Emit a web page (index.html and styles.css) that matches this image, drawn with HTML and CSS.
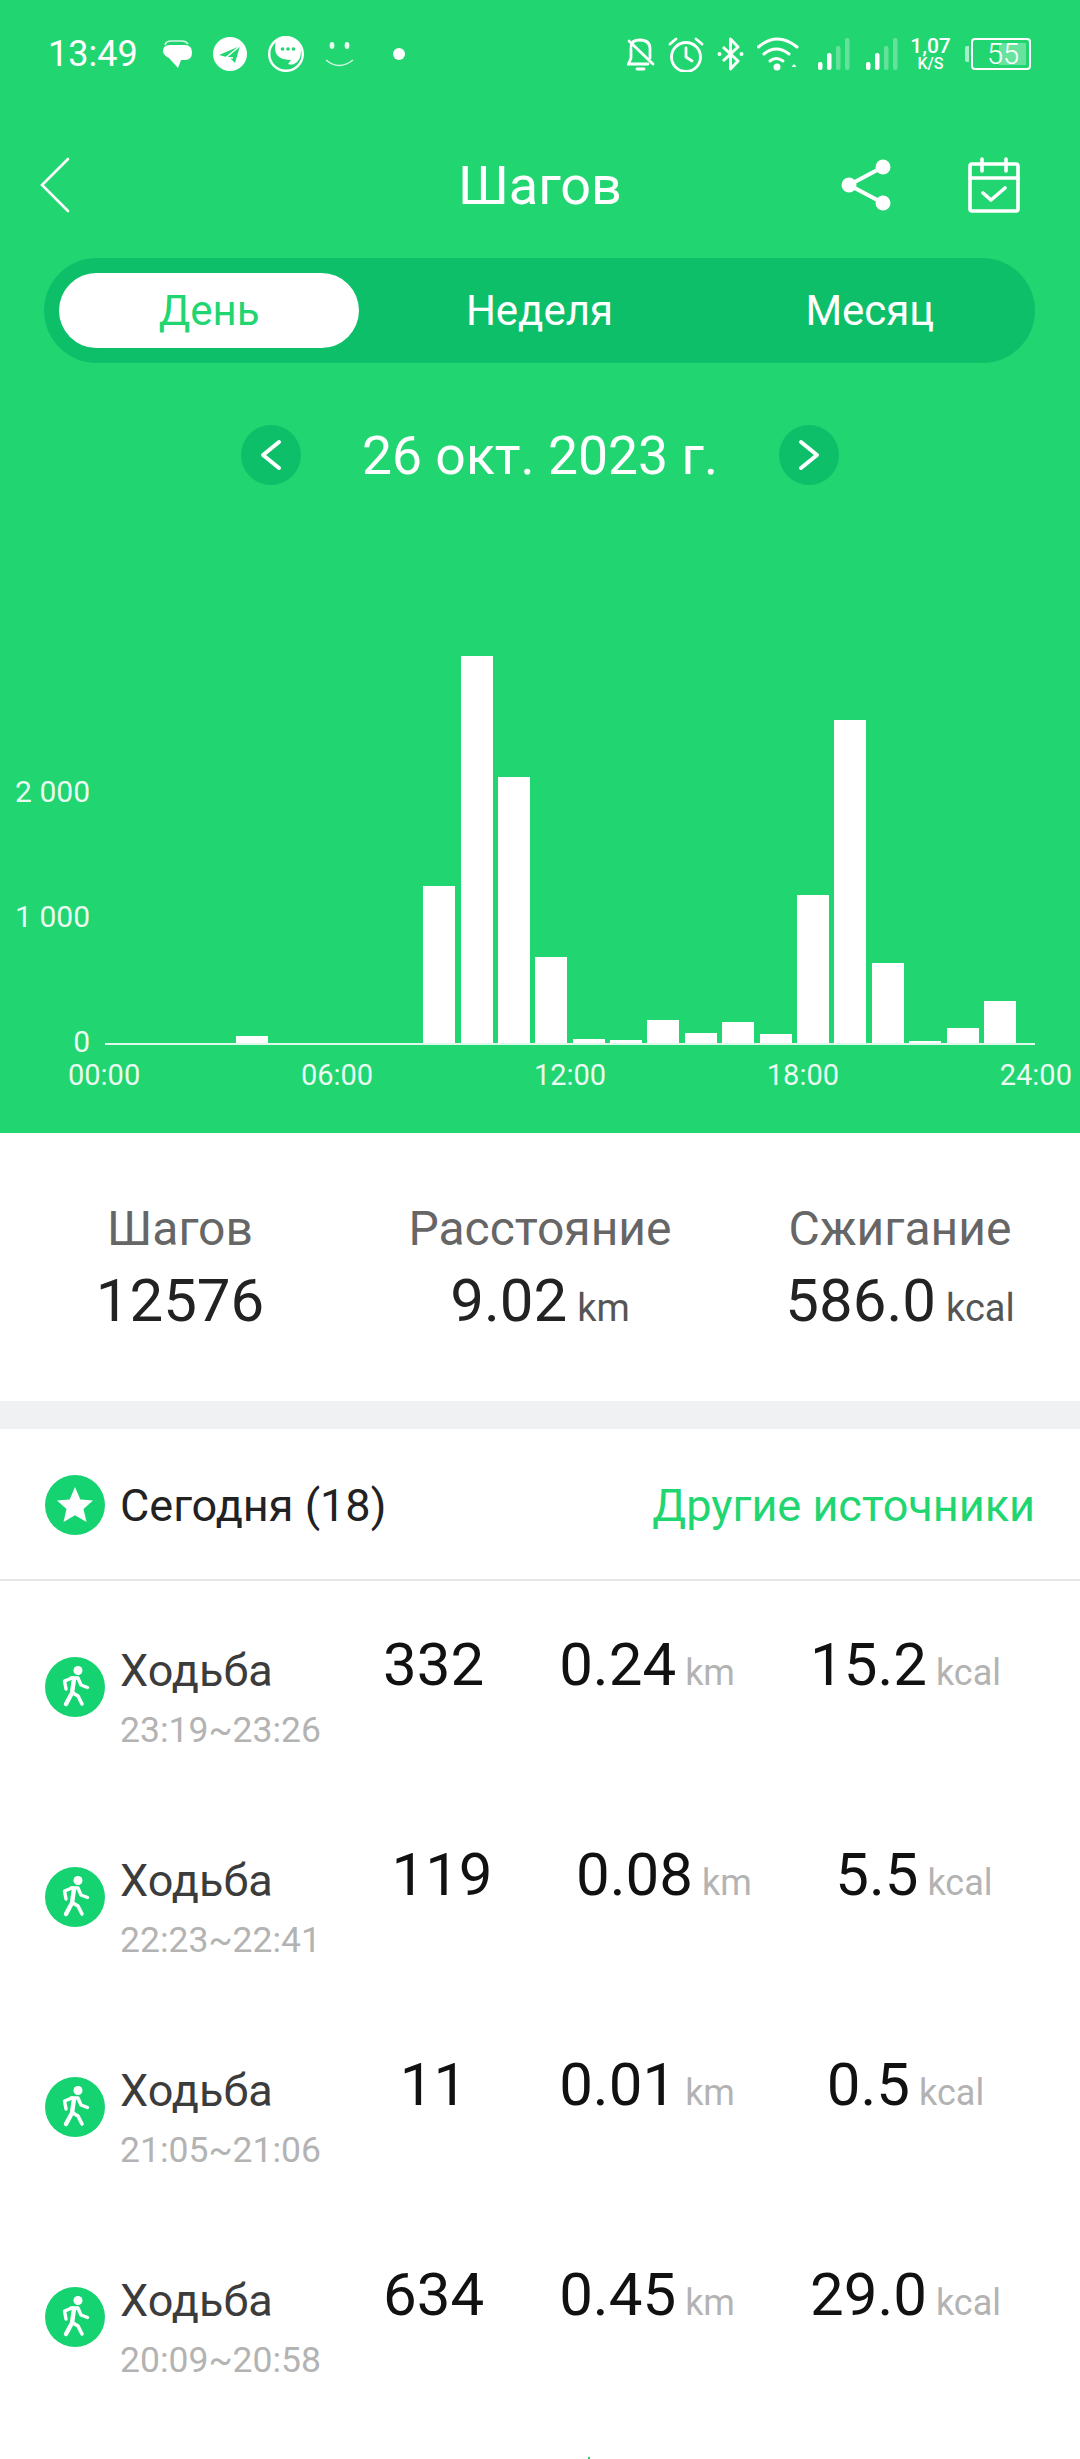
FILE: index.html
```html
<!DOCTYPE html>
<html lang="ru">
<head>
    <meta charset="UTF-8">
    <meta name="viewport" content="width=device-width, initial-scale=1.0">
    <title>Шагов</title>
    <link rel="stylesheet" href="styles.css">
</head>
<body>

<div class="page">
    <header class="header">
        <div class="statusbar">
            <div class="status-left">
                <span class="clock">13:49</span>
                <svg width="30" height="28" viewBox="0 0 30 28">
                    <path d="M3 5 Q4 1 9 1 H20 Q24 1 26 4" fill="none" stroke="#fff" stroke-width="1.6" opacity=".8"/>
                    <path d="M8 5 H23 Q30 5 30 12.5 Q30 20 23 20 H19 L16 28 L7 18 Q1 15 1 11 Q1 5 8 5 Z" fill="#fff"/>
                </svg>
                <svg width="34" height="34" viewBox="0 0 34 34">
                    <circle cx="17" cy="17" r="17" fill="#fff"/>
                    <path d="M6 18 L27 9 L22 26 L17 21 Z" fill="#21d670"/>
                    <path d="M27 9 L13 20.5 L20 21" fill="none" stroke="#fff" stroke-width="1.4"/>
                </svg>
                <svg width="36" height="36" viewBox="0 0 36 36">
                    <circle cx="18" cy="18" r="18" fill="#fff"/>
                    <circle cx="18" cy="18" r="15.6" fill="#21d670"/>
                    <path d="M8 4 A15 15 0 0 1 33 15 Q33 25 26 28 Q24 29 20 28 L23 24 Q8 24 7 13 Q7 8 8 4 Z" fill="#fff"/>
                    <circle cx="14.500" cy="13" r="1.800" fill="#21d670"/>
                    <circle cx="20" cy="13" r="1.800" fill="#21d670"/>
                    <circle cx="25.500" cy="13" r="1.800" fill="#21d670"/>
                </svg>
                <svg width="29" height="26" viewBox="0 0 29 26">
                    <ellipse cx="7" cy="4.500" rx="2.400" ry="3.400" fill="#fff" opacity=".9"/>
                    <ellipse cx="22" cy="4.500" rx="2.400" ry="3.400" fill="#fff" opacity=".9"/>
                    <path d="M1 19 Q14 30 28 19" fill="none" stroke="#fff" stroke-width="1.500" opacity=".8"/>
                </svg>
                <span class="status-dot"></span>
            </div>
            <div class="status-right">
                <svg width="28" height="33" viewBox="0 0 28 33" fill="none" stroke="#fff" stroke-width="2.800" stroke-linecap="round">
                    <path d="M4 9 Q4 2 13 2 Q23 2 23 11 V20"/>
                    <path d="M4 11 V20 L1.500 26 H21"/>
                    <path d="M2 3 L26 26"/>
                    <path d="M10 31 H17"/>
                </svg>
                <svg width="36" height="35" viewBox="0 0 36 35" fill="none" stroke="#fff" stroke-width="2.800" stroke-linecap="round" stroke-linejoin="round">
                    <circle cx="18" cy="20" r="14.500"/>
                    <path d="M18 11 V20 L24 24"/>
                    <path d="M2 7 L8 2"/>
                    <path d="M28 2 L34 7"/>
                </svg>
                <svg width="27" height="34" viewBox="0 0 27 34" fill="none" stroke="#fff" stroke-width="3" stroke-linejoin="round">
                    <path d="M6 10 L21 24 L13.500 32 V2 L21 10 L6 24"/>
                    <circle cx="2.500" cy="17" r="2" fill="#fff" stroke="none"/>
                    <circle cx="24.500" cy="17" r="2" fill="#fff" stroke="none"/>
                </svg>
                <svg class="icon-wifi" width="42" height="34" viewBox="0 0 42 34" fill="none" stroke="#fff" stroke-width="3" stroke-linecap="round">
                    <path d="M1.500 10 Q20 -6 40 10"/>
                    <path d="M8 17 Q20 7 33 17" transform="translate(-1 0)"/>
                    <path d="M14 24 Q20 19 27 24" transform="translate(-1 0)"/>
                    <circle cx="20" cy="30" r="3.500" fill="#fff" stroke="none"/>
                    <path d="M37 27 L39.500 30 H34.500 Z" fill="#fff" stroke="none"/>
                </svg>
                <svg class="icon-signal" width="33" height="32" viewBox="0 0 33 32" fill="#fff">
                    <rect x="0" y="24" width="4.500" height="8" rx="2"/>
                    <rect x="9" y="15" width="4.500" height="17" rx="2"/>
                    <rect x="18" y="8" width="4.500" height="24" rx="2" opacity=".3"/>
                    <rect x="27" y="0" width="4.500" height="32" rx="2" opacity=".3"/>
                </svg>
                <svg class="icon-signal-two" width="33" height="32" viewBox="0 0 33 32" fill="#fff">
                    <rect x="0" y="24" width="4.500" height="8" rx="2"/>
                    <rect x="9" y="15" width="4.500" height="17" rx="2"/>
                    <rect x="18" y="8" width="4.500" height="24" rx="2" opacity=".3"/>
                    <rect x="27" y="0" width="4.500" height="32" rx="2" opacity=".3"/>
                </svg>
                <div class="netspeed">
                    <span class="netspeed-value">1,07</span>
                    <span class="netspeed-unit">K/S</span>
                </div>
                <div class="battery">
                    <span class="battery-nub"></span>
                    <div class="battery-body">
                        <span class="battery-fill"></span>
                        <span class="battery-level">55</span>
                    </div>
                </div>
            </div>
        </div>

        <div class="navbar">
            <svg class="nav-back" width="30" height="56" viewBox="0 0 30 56" fill="none" stroke="#fff" stroke-width="2.600" stroke-linecap="round">
                <path d="M28 2 L2 28 L28 54"/>
            </svg>
            <h1 class="nav-title">Шагов</h1>
            <div class="nav-actions">
                <svg width="52" height="54" viewBox="0 0 52 54" fill="#fff">
                    <path d="M43 9 L9 27 L43 45" fill="none" stroke="#fff" stroke-width="4"/>
                    <circle cx="43" cy="9" r="7.500"/>
                    <circle cx="9" cy="27" r="7.500"/>
                    <circle cx="43" cy="45" r="7.500"/>
                </svg>
                <svg width="52" height="56" viewBox="0 0 52 56" fill="none" stroke="#fff" stroke-width="3.600" stroke-linejoin="round" stroke-linecap="round">
                    <rect x="2" y="7" width="48" height="47" rx="2"/>
                    <path d="M2 21 H50"/>
                    <path d="M14 2 V14"/>
                    <path d="M38 2 V14"/>
                    <path d="M15 36 L23 43 L37 31"/>
                </svg>
            </div>
        </div>

        <div class="tabs">
            <div class="tab tab-active"><span>День</span></div>
            <div class="tab"><span>Неделя</span></div>
            <div class="tab"><span>Месяц</span></div>
        </div>

        <div class="date-row">
            <div class="date-btn">
                <svg width="24" height="32" viewBox="0 0 24 32" fill="none" stroke="#fff" stroke-width="4" stroke-linecap="round" stroke-linejoin="round">
                    <path d="M20 3 L4 16 L20 29"/>
                </svg>
            </div>
            <span class="date-label">26 окт. 2023 г.</span>
            <div class="date-btn">
                <svg width="24" height="32" viewBox="0 0 24 32" fill="none" stroke="#fff" stroke-width="4" stroke-linecap="round" stroke-linejoin="round">
                    <path d="M4 3 L20 16 L4 29"/>
                </svg>
            </div>
        </div>

        <div class="chart">
            <div class="y-axis">
                <span>2 000</span>
                <span>1 000</span>
                <span>0</span>
            </div>
            <div class="plot">
                <div class="bar"></div>
                <div class="bar"></div>
                <div class="bar"></div>
                <div class="bar" style="height: 7px"></div>
                <div class="bar"></div>
                <div class="bar"></div>
                <div class="bar"></div>
                <div class="bar"></div>
                <div class="bar" style="height: 157px"></div>
                <div class="bar" style="height: 387px"></div>
                <div class="bar" style="height: 266px"></div>
                <div class="bar" style="height: 86px"></div>
                <div class="bar" style="height: 4px"></div>
                <div class="bar" style="height: 3px"></div>
                <div class="bar" style="height: 23px"></div>
                <div class="bar" style="height: 10px"></div>
                <div class="bar" style="height: 21px"></div>
                <div class="bar" style="height: 9px"></div>
                <div class="bar" style="height: 148px"></div>
                <div class="bar" style="height: 323px"></div>
                <div class="bar" style="height: 80px"></div>
                <div class="bar" style="height: 2px"></div>
                <div class="bar" style="height: 15px"></div>
                <div class="bar" style="height: 42px"></div>
            </div>
        </div>
        <div class="x-axis">
            <span>00:00</span>
            <span>06:00</span>
            <span>12:00</span>
            <span>18:00</span>
            <span>24:00</span>
        </div>
    </header>

    <section class="stats">
        <div class="stat">
            <div class="stat-label">Шагов</div>
            <div class="stat-value">12576</div>
        </div>
        <div class="stat">
            <div class="stat-label">Расстояние</div>
            <div class="stat-value">9.02<span class="stat-unit">km</span></div>
        </div>
        <div class="stat">
            <div class="stat-label">Сжигание</div>
            <div class="stat-value">586.0<span class="stat-unit">kcal</span></div>
        </div>
    </section>

    <section class="records">
        <div class="records-head">
            <div class="records-title">
                <svg class="round-icon" width="60" height="60" viewBox="0 0 60 60">
                    <circle cx="30" cy="30" r="30" fill="#16d372"/>
                    <path d="M30 12 L35.300 24.500 L48 25.500 L38.500 34 L41.500 47 L30 40.200 L18.500 47 L21.500 34 L12 25.500 L24.700 24.500 Z" fill="#fff"/>
                </svg>
                <span>Сегодня (18)</span>
            </div>
            <span class="records-link">Другие источники</span>
        </div>

        <div class="record">
            <div class="record-name">
                <svg class="round-icon" width="60" height="60" viewBox="0 0 60 60">
                    <use href="#walker"/>
                </svg>
                <div>
                    <div class="record-kind">Ходьба</div>
                    <div class="record-time">23:19~23:26</div>
                </div>
            </div>
            <div class="record-values">
                <span class="record-value">332</span>
                <span class="record-value">0.24<span class="record-unit">km</span></span>
                <span class="record-value">15.2<span class="record-unit">kcal</span></span>
            </div>
        </div>

        <div class="record">
            <div class="record-name">
                <svg class="round-icon" width="60" height="60" viewBox="0 0 60 60">
                    <use href="#walker"/>
                </svg>
                <div>
                    <div class="record-kind">Ходьба</div>
                    <div class="record-time">22:23~22:41</div>
                </div>
            </div>
            <div class="record-values">
                <span class="record-value">119</span>
                <span class="record-value">0.08<span class="record-unit">km</span></span>
                <span class="record-value">5.5<span class="record-unit">kcal</span></span>
            </div>
        </div>

        <div class="record">
            <div class="record-name">
                <svg class="round-icon" width="60" height="60" viewBox="0 0 60 60">
                    <use href="#walker"/>
                </svg>
                <div>
                    <div class="record-kind">Ходьба</div>
                    <div class="record-time">21:05~21:06</div>
                </div>
            </div>
            <div class="record-values">
                <span class="record-value">11</span>
                <span class="record-value">0.01<span class="record-unit">km</span></span>
                <span class="record-value">0.5<span class="record-unit">kcal</span></span>
            </div>
        </div>

        <div class="record">
            <div class="record-name">
                <svg class="round-icon" width="60" height="60" viewBox="0 0 60 60">
                    <use href="#walker"/>
                </svg>
                <div>
                    <div class="record-kind">Ходьба</div>
                    <div class="record-time">20:09~20:58</div>
                </div>
            </div>
            <div class="record-values">
                <span class="record-value">634</span>
                <span class="record-value">0.45<span class="record-unit">km</span></span>
                <span class="record-value">29.0<span class="record-unit">kcal</span></span>
            </div>
        </div>

        <div class="record-more"></div>
    </section>
</div>

<svg class="icon-defs" width="0" height="0">
    <defs>
        <g id="walker">
            <circle cx="30" cy="30" r="30" fill="#16d372"/>
            <circle cx="33" cy="13.500" r="4.500" fill="#fff"/>
            <path d="M26 21 L33 21 L36 28 L42.500 30.500" fill="none" stroke="#fff" stroke-width="3.400" stroke-linecap="round" stroke-linejoin="round"/>
            <path d="M21 32 L19.500 24 L27 21" fill="none" stroke="#fff" stroke-width="3.400" stroke-linecap="round" stroke-linejoin="round"/>
            <path d="M29 22 L27 36 L21 47" fill="none" stroke="#fff" stroke-width="4.400" stroke-linecap="round" stroke-linejoin="round"/>
            <path d="M28 36 L33 39 L37 47" fill="none" stroke="#fff" stroke-width="3.600" stroke-linecap="round" stroke-linejoin="round"/>
        </g>
    </defs>
</svg>

</body>
</html>
```

FILE: styles.css
```css
* {
    box-sizing: border-box;
}

html, body {
    margin: 0;
    height: 100%;
    background: #fff;
}

.page {
    width: 1080px;
    height: 2459px;
    overflow: hidden;
    font-family: Roboto, sans-serif;
}

.icon-defs {
    display: block;
}

/* green top part */
.header {
    height: 1133px;
    background: #21d670;
    color: #fff;
}

.statusbar {
    height: 108px;
    padding: 0 49px 0 48px;
    display: flex;
    align-items: center;
    justify-content: space-between;
}

.status-left,
.status-right {
    display: flex;
    align-items: center;
}

.status-left {
    gap: 21px;
}

.status-right {
    gap: 13px;
}

.clock {
    font-size: 36px;
    font-weight: 400;
    margin-right: 3px;
}

.status-dot {
    width: 12px;
    height: 12px;
    margin-left: 18px;
    border-radius: 50%;
    background: #fff;
}

.icon-signal {
    margin-left: 6px;
}

.icon-signal-two {
    margin-left: 2px;
}

.netspeed {
    width: 37px;
    display: flex;
    flex-direction: column;
    align-items: center;
    font-weight: 500;
}

.netspeed-value {
    font-size: 21px;
    line-height: 20px;
}

.netspeed-unit {
    font-size: 16px;
    line-height: 16px;
}

.battery {
    display: flex;
    align-items: center;
    gap: 2px;
    margin-left: 3px;
}

.battery-nub {
    width: 4px;
    height: 16px;
    border-radius: 2px 0 0 2px;
    background: rgba(255, 255, 255, 0.6);
}

.battery-body {
    width: 60px;
    height: 32px;
    padding: 3px;
    border: 2px solid #fff;
    border-radius: 4px;
    display: flex;
    justify-content: flex-end;
    position: relative;
}

.battery-fill {
    width: 27px;
    background: rgba(255, 255, 255, 0.32);
}

.battery-level {
    position: absolute;
    left: 14px;
    top: -3px;
    font-size: 29px;
    font-weight: 300;
    line-height: 34px;
}

.navbar {
    height: 130px;
    margin-top: 12px;
    padding: 0 60px 0 40px;
    display: flex;
    align-items: center;
    position: relative;
}

.nav-title {
    position: absolute;
    left: 0;
    right: 0;
    margin: 0;
    font-size: 54px;
    font-weight: 400;
    text-align: center;
}

.nav-actions {
    margin-left: auto;
    display: flex;
    align-items: center;
    gap: 76px;
}

.tabs {
    height: 105px;
    margin: 8px 45px 0 44px;
    border-radius: 53px;
    background: #0ebf69;
    display: grid;
    grid-template-columns: 1fr 1fr 1fr;
}

.tab {
    margin: 15px;
    border-radius: 38px;
    display: flex;
    align-items: center;
    justify-content: center;
    font-size: 42px;
}

.tab-active {
    background: #fff;
    color: #21d670;
}

.date-row {
    margin-top: 61px;
    display: flex;
    align-items: center;
    justify-content: center;
    gap: 61px;
}

.date-btn {
    width: 60px;
    height: 60px;
    border-radius: 50%;
    background: #0ebf69;
    display: flex;
    align-items: center;
    justify-content: center;
}

.date-label {
    font-size: 53.5px;
    line-height: 60px;
    padding-top: 2px;
}

/* chart */
.chart {
    margin-top: 170px;
    display: flex;
}

.y-axis {
    width: 105px;
    padding-right: 15px;
    margin-bottom: -14px;
    display: flex;
    flex-direction: column;
    justify-content: flex-end;
    align-items: flex-end;
    gap: 91px;
    font-size: 30px;
    line-height: 34px;
    color: rgba(255, 255, 255, 0.92);
}

.plot {
    width: 930px;
    height: 389px;
    padding: 0 19px;
    border-bottom: 2px solid rgba(255, 255, 255, 0.85);
    display: flex;
    align-items: flex-end;
    justify-content: space-between;
}

.bar {
    width: 32px;
    background: #fff;
}

.x-axis {
    margin: 13px 8px 0 68px;
    display: flex;
    justify-content: space-between;
    font-size: 29px;
    line-height: 34px;
    color: rgba(255, 255, 255, 0.92);
}

/* totals */
.stats {
    height: 296px;
    padding-top: 71px;
    display: grid;
    grid-template-columns: 1fr 1fr 1fr;
    align-content: start;
    text-align: center;
    border-bottom: 28px solid #f0f1f3;
}

.stat-label {
    font-size: 48px;
    line-height: 50px;
    color: #666;
}

.stat-value {
    margin-top: 12px;
    font-size: 60px;
    line-height: 70px;
    color: #222;
}

.stat-unit {
    margin-left: 10px;
    font-size: 38px;
    color: #555;
}

/* list */
.records-head {
    height: 152px;
    padding: 2px 45px 0 45px;
    border-bottom: 2px solid #e6e6e6;
    display: flex;
    align-items: center;
    justify-content: space-between;
}

.records-title {
    display: flex;
    align-items: center;
    gap: 15px;
    font-size: 45px;
    color: #222;
}

.records-link {
    font-size: 45px;
    color: #21d670;
}

.record {
    height: 210px;
    padding-top: 49px;
    padding-right: 4px;
    display: flex;
    align-items: flex-start;
}

.record-name {
    width: 308px;
    padding-left: 45px;
    padding-top: 16px;
    flex: none;
    display: flex;
    align-items: flex-start;
    gap: 15px;
}

.round-icon {
    flex: none;
    display: block;
}

.record-name .round-icon {
    margin-top: 11px;
}

.record-kind {
    font-size: 45px;
    line-height: 50px;
    color: #3c3c3c;
}

.record-time {
    margin-top: 14px;
    font-size: 35.5px;
    line-height: 40px;
    white-space: nowrap;
    color: #b3b3b3;
}

.record-values {
    flex: 1;
    display: flex;
    justify-content: space-evenly;
}

.record-value {
    font-size: 60px;
    line-height: 70px;
    color: #111;
}

.record-unit {
    margin-left: 9px;
    font-size: 36px;
    color: #b3b3b3;
}

.record-more {
    width: 2px;
    height: 3px;
    margin: 36px 0 0 588px;
    background: #21d670;
}
```
